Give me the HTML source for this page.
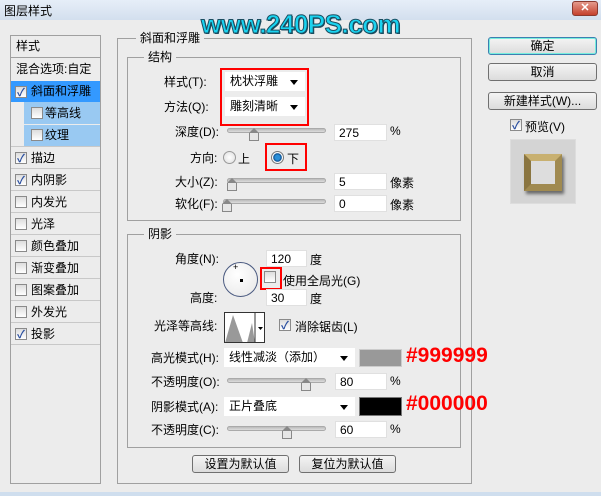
<!DOCTYPE html>
<html><head><meta charset="utf-8"><style>
*{margin:0;padding:0;box-sizing:border-box}
body{width:601px;height:496px;background:#ececec;font-family:"Liberation Sans","Noto Sans CJK SC",sans-serif;font-size:12px;color:#000;position:relative;overflow:hidden}
.a{position:absolute;white-space:nowrap}
.title{left:0;top:0;width:601px;height:20px;background:linear-gradient(#e6eef8,#d3dfee)}
.box{position:absolute;border:1px solid #a0a0a0}
.lg{background:#ececec;padding:0 4px}
.inp{position:absolute;background:#fff;border:1px solid #e0e0e0;height:17px;padding-left:4px;line-height:16px}
.dd{position:absolute;background:#fff;height:19px;line-height:19px;padding-left:5px}
.dd:after{content:"";position:absolute;right:7px;top:8px;border:4px solid transparent;border-top:5px solid #000;border-bottom:0}
.sl{position:absolute;height:5px;background:linear-gradient(#bbb,#ddd);border:1px solid #aaa;border-radius:3px}
.th{position:absolute;width:10px;height:8px;background:#e6e6e6;border:1px solid #888;border-top:none}
.th:before{content:"";position:absolute;left:-1px;top:-5px;border-left:5px solid transparent;border-right:5px solid transparent;border-bottom:5px solid #888}
.cb{position:absolute;width:12px;height:12px;border:1px solid #8a8a8a;background:linear-gradient(#ddd,#fff)}
.ck:after{content:"✓";position:absolute;left:1px;top:-3px;font-size:11px;color:#2a4fa0;font-weight:bold}
.btn{position:absolute;height:18px;border:1px solid #707070;border-radius:3px;background:linear-gradient(#f4f4f4,#dcdcdc);text-align:center;line-height:16px;font-size:12px}
.red{position:absolute;border:2px solid #f00}
</style></head><body>
<div class="a title"></div>
<div class="a" style="left:4px;top:2px;font-size:12px">图层样式</div>
<div class="a" style="left:572px;top:1px;width:26px;height:15px;background:linear-gradient(#e49a8c,#c5412d);border:1px solid #8a3a30;border-radius:3px;color:#fff;text-align:center;font-weight:bold;font-size:11px;line-height:13px">✕</div>
<div class="a" style="left:0;top:492px;width:601px;height:4px;background:#cfdeee"></div>

<div class="box" style="left:10px;top:35px;width:91px;height:449px;background:#ececec"></div>
<div class="a" style="left:16px;top:36px;line-height:20px">样式</div>
<div class="a" style="left:11px;top:57px;width:89px;height:1px;background:#a0a0a0"></div>
<div class="a" style="left:16px;top:58px;line-height:22px">混合选项:自定</div>
<div class="a" style="left:11px;top:81px;width:89px;height:21px;background:#3399ff"></div>
<div class="cb ck" style="left:15px;top:86px"></div><div class="a" style="left:31px;top:81px;line-height:21px">斜面和浮雕</div>
<div class="a" style="left:24px;top:102px;width:76px;height:22px;background:#99c9f2"></div>
<div class="cb" style="left:31px;top:107px"></div><div class="a" style="left:45px;top:102px;line-height:22px">等高线</div>
<div class="a" style="left:24px;top:125px;width:76px;height:21px;background:#99c9f2"></div>
<div class="cb" style="left:31px;top:129px"></div><div class="a" style="left:45px;top:125px;line-height:21px">纹理</div>
<div class="cb ck" style="left:15px;top:152px"></div><div class="a" style="left:31px;top:147px;line-height:22px">描边</div>
<div class="cb ck" style="left:15px;top:174px"></div><div class="a" style="left:31px;top:169px;line-height:22px">内阴影</div>
<div class="cb" style="left:15px;top:196px"></div><div class="a" style="left:31px;top:191px;line-height:22px">内发光</div>
<div class="cb" style="left:15px;top:218px"></div><div class="a" style="left:31px;top:213px;line-height:22px">光泽</div>
<div class="cb" style="left:15px;top:240px"></div><div class="a" style="left:31px;top:235px;line-height:22px">颜色叠加</div>
<div class="cb" style="left:15px;top:262px"></div><div class="a" style="left:31px;top:257px;line-height:22px">渐变叠加</div>
<div class="cb" style="left:15px;top:284px"></div><div class="a" style="left:31px;top:279px;line-height:22px">图案叠加</div>
<div class="cb" style="left:15px;top:306px"></div><div class="a" style="left:31px;top:301px;line-height:22px">外发光</div>
<div class="cb ck" style="left:15px;top:328px"></div><div class="a" style="left:31px;top:323px;line-height:22px">投影</div>
<div class="a" style="left:11px;top:146px;width:89px;height:1px;background:#c8c8c8"></div>
<div class="a" style="left:11px;top:168px;width:89px;height:1px;background:#c8c8c8"></div>
<div class="a" style="left:11px;top:190px;width:89px;height:1px;background:#c8c8c8"></div>
<div class="a" style="left:11px;top:212px;width:89px;height:1px;background:#c8c8c8"></div>
<div class="a" style="left:11px;top:234px;width:89px;height:1px;background:#c8c8c8"></div>
<div class="a" style="left:11px;top:256px;width:89px;height:1px;background:#c8c8c8"></div>
<div class="a" style="left:11px;top:278px;width:89px;height:1px;background:#c8c8c8"></div>
<div class="a" style="left:11px;top:300px;width:89px;height:1px;background:#c8c8c8"></div>
<div class="a" style="left:11px;top:322px;width:89px;height:1px;background:#c8c8c8"></div>
<div class="a" style="left:11px;top:344px;width:89px;height:1px;background:#c8c8c8"></div>

<div class="box" style="left:117px;top:38px;width:355px;height:446px"></div>
<div class="a lg" style="left:136px;top:30px;line-height:16px">斜面和浮雕</div>
<div class="box" style="left:127px;top:57px;width:334px;height:164px"></div>
<div class="a lg" style="left:144px;top:49px;line-height:16px">结构</div>

<div class="red" style="left:220px;top:68px;width:89px;height:58px"></div>
<div class="a" style="left:164px;top:73px;line-height:18px">样式(T):</div>
<div class="dd" style="left:225px;top:72px;width:80px">枕状浮雕</div>
<div class="a" style="left:164px;top:98px;line-height:18px">方法(Q):</div>
<div class="dd" style="left:225px;top:97px;width:80px">雕刻清晰</div>
<div class="a" style="left:175px;top:124px;line-height:16px">深度(D):</div>
<div class="sl" style="left:227px;top:128px;width:99px"></div><div class="th" style="left:249px;top:133px"></div>
<div class="inp" style="left:334px;top:124px;width:53px">275</div><div class="a" style="left:390px;top:124px">%</div>
<div class="a" style="left:190px;top:150px;line-height:16px">方向:</div>
<div class="a" style="left:223px;top:151px;width:13px;height:13px;border-radius:50%;border:1px solid #999;background:radial-gradient(#fff,#ddd)"></div>
<div class="a" style="left:238px;top:150px">上</div>
<div class="red" style="left:265px;top:143px;width:42px;height:28px"></div>
<div class="a" style="left:271px;top:151px;width:13px;height:13px;border-radius:50%;border:1px solid #777;background:radial-gradient(#2a8fd8 30%,#0a4f90 50%,#fff 60%,#ddd)"></div>
<div class="a" style="left:287px;top:150px">下</div>
<div class="a" style="left:175px;top:174px;line-height:16px">大小(Z):</div>
<div class="sl" style="left:227px;top:178px;width:99px"></div><div class="th" style="left:227px;top:183px"></div>
<div class="inp" style="left:334px;top:173px;width:53px">5</div><div class="a" style="left:390px;top:174px">像素</div>
<div class="a" style="left:175px;top:196px;line-height:16px">软化(F):</div>
<div class="sl" style="left:223px;top:199px;width:103px"></div><div class="th" style="left:222px;top:204px"></div>
<div class="inp" style="left:334px;top:195px;width:53px">0</div><div class="a" style="left:390px;top:196px">像素</div>

<div class="box" style="left:127px;top:234px;width:334px;height:214px"></div>
<div class="a lg" style="left:144px;top:226px;line-height:16px">阴影</div>
<div class="a" style="left:175px;top:251px;line-height:16px">角度(N):</div>
<div class="inp" style="left:266px;top:250px;width:41px">120</div><div class="a" style="left:310px;top:251px">度</div>
<div class="a" style="left:223px;top:262px;width:35px;height:35px;border-radius:50%;border:1px solid #4a5a80;background:radial-gradient(circle at 40% 35%,#fff,#e6e6e6)"></div>
<div class="a" style="left:240px;top:279px;width:3px;height:3px;background:#000"></div>
<div class="a" style="left:233px;top:262px;font-size:9px">+</div>
<div class="red" style="left:260px;top:267px;width:22px;height:23px"></div>
<div class="cb" style="left:264px;top:271px"></div>
<div class="a" style="left:283px;top:272px">使用全局光(G)</div>
<div class="a" style="left:190px;top:290px;line-height:16px">高度:</div>
<div class="inp" style="left:266px;top:289px;width:41px">30</div><div class="a" style="left:310px;top:290px">度</div>
<div class="a" style="left:154px;top:318px;line-height:16px">光泽等高线:</div>
<div class="a" style="left:224px;top:312px;width:41px;height:31px;border:1px solid #333;background:#fff;overflow:hidden">
<svg width="41" height="31" style="position:absolute;left:0;top:0"><path d="M0 30 L8 2 L18 30 L22 30 L27 10 L30 30 Z" fill="#999"/><line x1="30" y1="0" x2="30" y2="31" stroke="#333"/><path d="M33 14 h5 l-2.5 3z" fill="#000"/></svg></div>
<div class="cb ck" style="left:279px;top:319px"></div>
<div class="a" style="left:295px;top:318px">消除锯齿(L)</div>
<div class="a" style="left:151px;top:350px;line-height:16px">高光模式(H):</div>
<div class="dd" style="left:224px;top:348px;width:131px">线性减淡（添加）</div>
<div class="a" style="left:359px;top:349px;width:43px;height:18px;background:#999;border:1px solid #ccc"></div>
<div class="a" style="left:406px;top:342px;color:#f00;font-size:21px;font-weight:bold;line-height:28px">#999999</div>
<div class="a" style="left:151px;top:374px;line-height:16px">不透明度(O):</div>
<div class="sl" style="left:227px;top:378px;width:99px"></div><div class="th" style="left:301px;top:383px"></div>
<div class="inp" style="left:335px;top:373px;width:52px">80</div><div class="a" style="left:390px;top:374px">%</div>
<div class="a" style="left:151px;top:399px;line-height:16px">阴影模式(A):</div>
<div class="dd" style="left:224px;top:397px;width:131px">正片叠底</div>
<div class="a" style="left:359px;top:397px;width:43px;height:19px;background:#000;border:1px solid #777"></div>
<div class="a" style="left:406px;top:390px;color:#f00;font-size:21px;font-weight:bold;line-height:28px">#000000</div>
<div class="a" style="left:151px;top:422px;line-height:16px">不透明度(C):</div>
<div class="sl" style="left:227px;top:426px;width:99px"></div><div class="th" style="left:282px;top:431px"></div>
<div class="inp" style="left:335px;top:421px;width:52px">60</div><div class="a" style="left:390px;top:422px">%</div>

<div class="btn" style="left:192px;top:455px;width:97px">设置为默认值</div>
<div class="btn" style="left:299px;top:455px;width:97px">复位为默认值</div>

<div class="btn" style="left:488px;top:37px;width:109px;border-color:#3c7fb1;box-shadow:inset 0 0 0 1px #7ed">确定</div>
<div class="btn" style="left:488px;top:63px;width:109px">取消</div>
<div class="btn" style="left:488px;top:92px;width:109px">新建样式(W)...</div>
<div class="cb ck" style="left:510px;top:119px"></div>
<div class="a" style="left:525px;top:118px">预览(V)</div>
<div class="a" style="left:510px;top:139px;width:66px;height:65px;background:#d4d4d4;border:1px solid #ddd"></div>
<div class="a" style="left:524px;top:154px;width:38px;height:37px;border:7px solid #a08a50;border-top-color:#c8b070;border-left-color:#8a7540;background:#ddd;box-shadow:2px 3px 3px rgba(0,0,0,.5)"></div>

<div class="a" style="left:201px;top:8px;font-size:26px;font-weight:bold;color:#19d3f0;line-height:32px;letter-spacing:-0.5px;-webkit-text-stroke:1px #1a4d60;text-shadow:1px 1px 0 #1a4d60">www.240PS.com</div>
</body></html>
